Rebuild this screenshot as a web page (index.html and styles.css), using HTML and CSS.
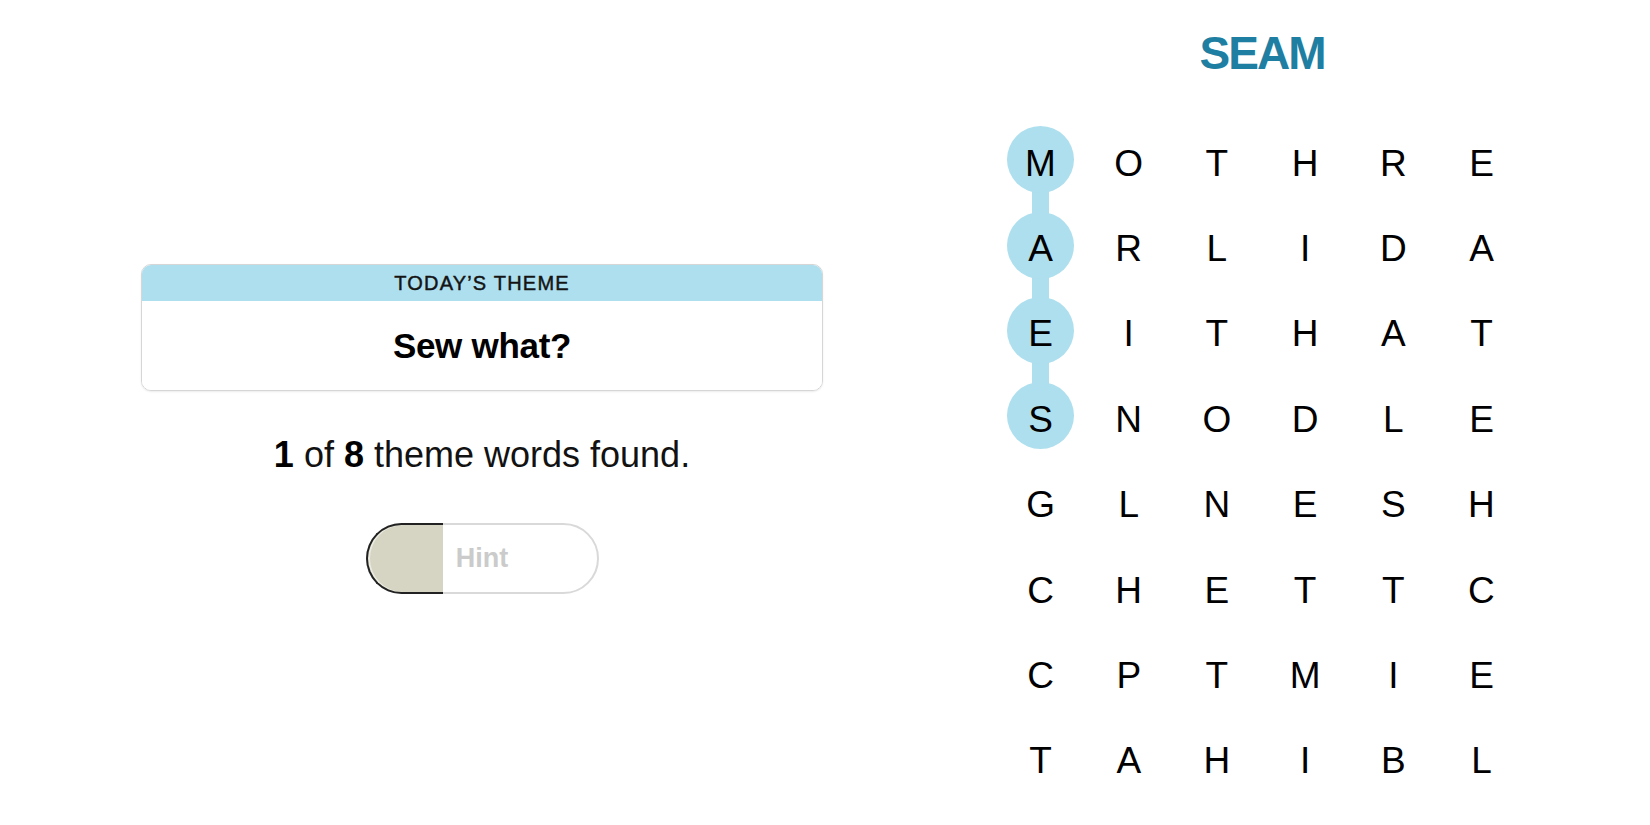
FILE: index.html
```html
<!DOCTYPE html>
<html lang="en">
<head>
<meta charset="utf-8">
<title>Strands</title>
<link rel="stylesheet" href="styles.css">
</head>
<body>
<main class="page">
  <section class="left">
    <div class="theme-card">
      <div class="theme-head">TODAY’S THEME</div>
      <div class="theme-body">Sew what?</div>
    </div>
    <p class="progress"><b>1</b> of <b>8</b> theme words found.</p>
    <button class="hint" type="button"><span class="hint-fill"></span><span class="hint-label">Hint</span></button>
  </section>
  <section class="right">
    <h1 class="found-word">SEAM</h1>
    <div class="board">
      <div class="cell sel link"><span class="ch">M</span></div>
      <div class="cell"><span class="ch">O</span></div>
      <div class="cell"><span class="ch">T</span></div>
      <div class="cell"><span class="ch">H</span></div>
      <div class="cell"><span class="ch">R</span></div>
      <div class="cell"><span class="ch">E</span></div>

      <div class="cell sel link"><span class="ch">A</span></div>
      <div class="cell"><span class="ch">R</span></div>
      <div class="cell"><span class="ch">L</span></div>
      <div class="cell"><span class="ch">I</span></div>
      <div class="cell"><span class="ch">D</span></div>
      <div class="cell"><span class="ch">A</span></div>

      <div class="cell sel link"><span class="ch">E</span></div>
      <div class="cell"><span class="ch">I</span></div>
      <div class="cell"><span class="ch">T</span></div>
      <div class="cell"><span class="ch">H</span></div>
      <div class="cell"><span class="ch">A</span></div>
      <div class="cell"><span class="ch">T</span></div>

      <div class="cell sel"><span class="ch">S</span></div>
      <div class="cell"><span class="ch">N</span></div>
      <div class="cell"><span class="ch">O</span></div>
      <div class="cell"><span class="ch">D</span></div>
      <div class="cell"><span class="ch">L</span></div>
      <div class="cell"><span class="ch">E</span></div>

      <div class="cell"><span class="ch">G</span></div>
      <div class="cell"><span class="ch">L</span></div>
      <div class="cell"><span class="ch">N</span></div>
      <div class="cell"><span class="ch">E</span></div>
      <div class="cell"><span class="ch">S</span></div>
      <div class="cell"><span class="ch">H</span></div>

      <div class="cell"><span class="ch">C</span></div>
      <div class="cell"><span class="ch">H</span></div>
      <div class="cell"><span class="ch">E</span></div>
      <div class="cell"><span class="ch">T</span></div>
      <div class="cell"><span class="ch">T</span></div>
      <div class="cell"><span class="ch">C</span></div>

      <div class="cell"><span class="ch">C</span></div>
      <div class="cell"><span class="ch">P</span></div>
      <div class="cell"><span class="ch">T</span></div>
      <div class="cell"><span class="ch">M</span></div>
      <div class="cell"><span class="ch">I</span></div>
      <div class="cell"><span class="ch">E</span></div>

      <div class="cell"><span class="ch">T</span></div>
      <div class="cell"><span class="ch">A</span></div>
      <div class="cell"><span class="ch">H</span></div>
      <div class="cell"><span class="ch">I</span></div>
      <div class="cell"><span class="ch">B</span></div>
      <div class="cell"><span class="ch">L</span></div>
    </div>
  </section>
</main>
</body>
</html>
```

FILE: styles.css
```css
* { box-sizing: border-box; }

html, body {
  margin: 0;
  padding: 0;
  background: #ffffff;
  color: #121212;
  font-family: "Liberation Sans", Arial, sans-serif;
}

.page {
  display: flex;
  width: 1650px;
  height: 825px;
  overflow: hidden;
}

/* ---------- left column ---------- */
.left {
  width: 964px;
  padding-top: 264px;
  display: flex;
  flex-direction: column;
  align-items: center;
}

.theme-card {
  width: 682px;
  border: 1px solid #d6d6d6;
  border-radius: 10px;
  overflow: hidden;
  box-shadow: 0 1px 2px rgba(0, 0, 0, 0.08);
}

.theme-head {
  height: 36px;
  background: #aedfee;
  display: flex;
  align-items: center;
  justify-content: center;
  font-size: 20px;
  letter-spacing: 1.2px;
  color: #141414;
  padding-top: 1px;
  -webkit-text-stroke: 0.45px #141414;
}

.theme-body {
  height: 89px;
  background: #fff;
  display: flex;
  align-items: center;
  justify-content: center;
  font-size: 35px;
  font-weight: 700;
  color: #000;
  letter-spacing: -0.3px;
}

.progress {
  margin: 44px 0 0;
  font-size: 36px;
  line-height: 40px;
  color: #121212;
}

.progress b { font-weight: 700; color: #000; }

.hint {
  position: relative;
  margin-top: 48px;
  width: 233px;
  height: 71px;
  border: 2px solid #d9d9d9;
  border-radius: 36px;
  background: #fff;
  padding: 0;
  display: flex;
  align-items: center;
  justify-content: center;
  font-family: inherit;
}

.hint-fill {
  position: absolute;
  left: -2px;
  top: -2px;
  bottom: -2px;
  width: 77px;
  border: 2px solid #222;
  border-right: none;
  border-radius: 36px 0 0 36px;
  background: #d6d5c3;
  box-shadow: inset 2px 0 0 #ecebe2;
}

.hint-label {
  position: relative;
  font-size: 27px;
  font-weight: 700;
  color: #cbcbcb;
  margin-left: 0;
}

/* ---------- right column ---------- */
.right {
  width: 594px;
  padding-top: 30px;
  display: flex;
  flex-direction: column;
  align-items: center;
}

.found-word {
  margin: 0 0 41px;
  font-size: 46px;
  line-height: 46px;
  font-weight: 700;
  letter-spacing: -2px;
  color: #1f7fa3;
  padding-left: 2px;
}

.board {
  display: grid;
  grid-template-columns: repeat(6, 88.2px);
  grid-template-rows: repeat(8, 85.4px);
}

.cell {
  position: relative;
  display: flex;
  align-items: center;
  justify-content: center;
}

.ch {
  position: relative;
  z-index: 2;
  font-size: 37px;
  line-height: 37px;
  padding-top: 7px;
  color: #000;
}

.sel::before {
  content: "";
  position: absolute;
  left: 50%;
  top: 50%;
  width: 67px;
  height: 67px;
  margin: -33.5px 0 0 -33.5px;
  border-radius: 50%;
  background: #aedfee;
  z-index: 1;
}

.link::after {
  content: "";
  position: absolute;
  left: 50%;
  top: 50%;
  width: 17px;
  height: 85.4px;
  margin-left: -8.5px;
  background: #aedfee;
  z-index: 0;
}
```
